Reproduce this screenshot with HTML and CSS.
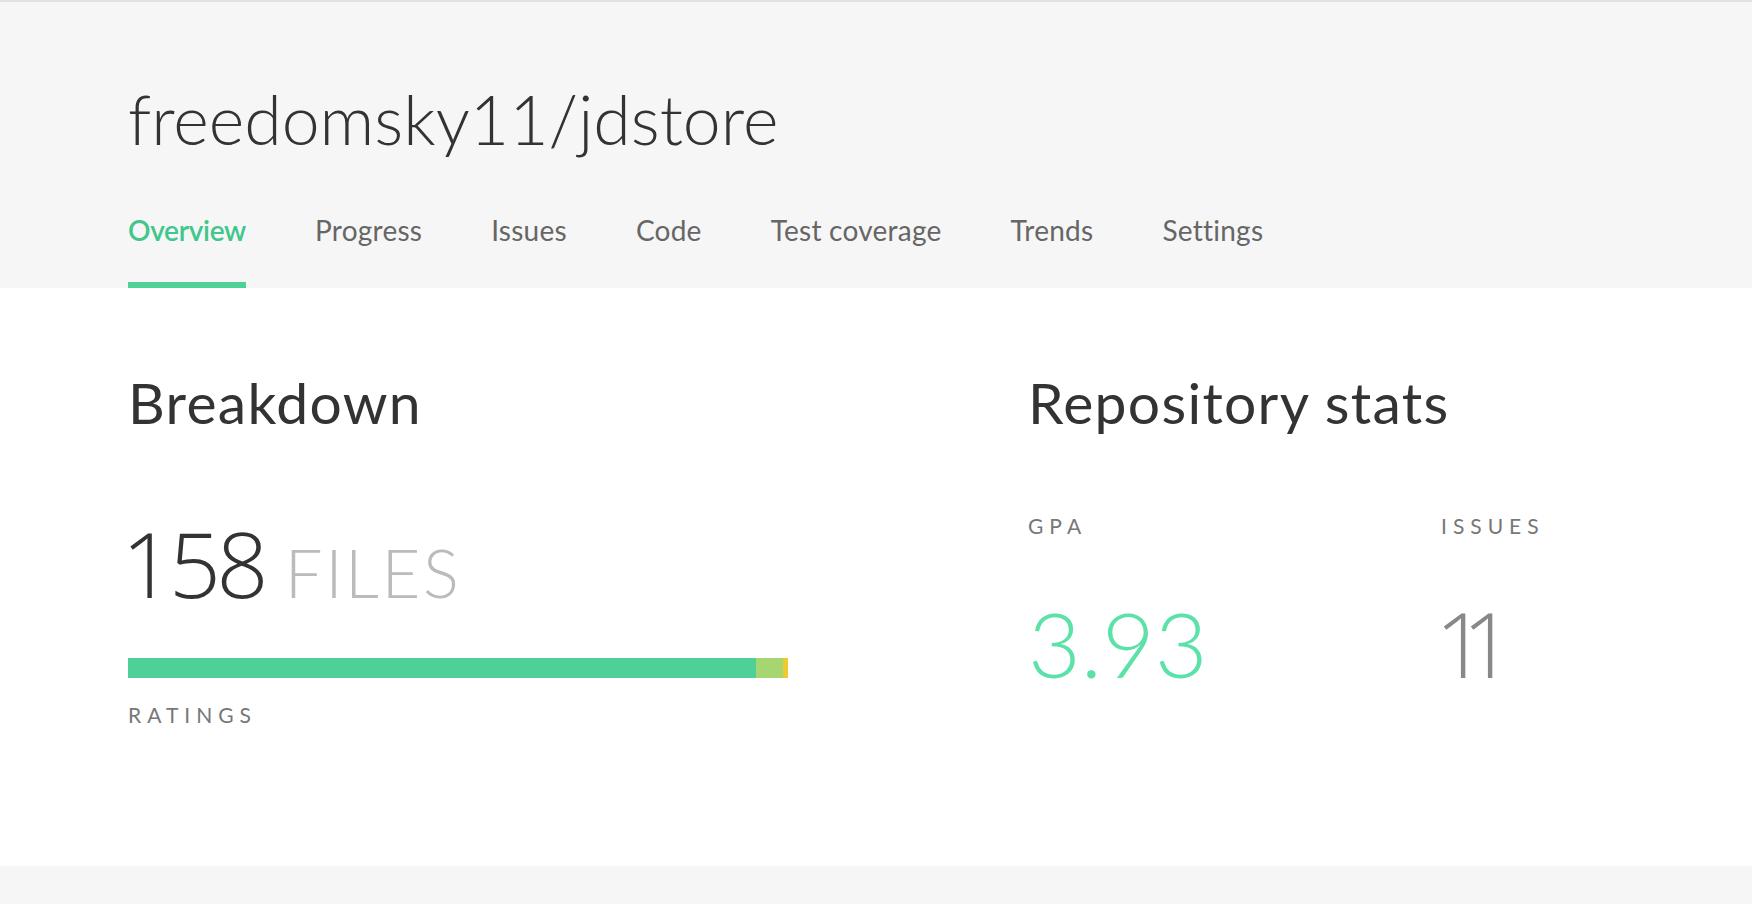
FILE: index.html
```html
<!DOCTYPE html>
<html lang="en">
<head>
<meta charset="utf-8">
<title>freedomsky11/jdstore</title>
<link rel="stylesheet" href="styles.css">
</head>
<body>
<header class="repo-header">
  <div class="container">
    <h1 class="repo-title">freedomsky11/jdstore</h1>
    <nav class="repo-nav">
      <a class="nav-link active" href="#">Overview</a>
      <a class="nav-link" href="#">Progress</a>
      <a class="nav-link" href="#">Issues</a>
      <a class="nav-link" href="#">Code</a>
      <a class="nav-link" href="#">Test coverage</a>
      <a class="nav-link" href="#">Trends</a>
      <a class="nav-link" href="#">Settings</a>
    </nav>
  </div>
</header>
<main class="repo-main">
  <div class="container columns">
    <section class="breakdown">
      <h2 class="section-title">Breakdown</h2>
      <div class="files-count"><span class="files-number">158</span><span class="files-unit">FILES</span></div>
      <div class="ratings-bar">
        <span class="seg seg-a" style="width:628px"></span>
        <span class="seg seg-b" style="width:27px"></span>
        <span class="seg seg-c" style="width:5px"></span>
      </div>
      <div class="label">RATINGS</div>
    </section>
    <section class="stats">
      <h2 class="section-title">Repository stats</h2>
      <div class="stats-grid">
        <div class="stat">
          <div class="label">GPA</div>
          <div class="stat-value gpa">3.93</div>
        </div>
        <div class="stat">
          <div class="label">ISSUES</div>
          <div class="stat-value issues">11</div>
        </div>
      </div>
    </section>
  </div>
</main>
<footer class="page-footer"></footer>
</body>
</html>
```
FILE: styles.css
```css
html {
  background: #f6f6f6;
}
body {
  margin: 0;
  font-family: "Lato", "Open Sans", sans-serif;
  color: #333;
  border-top: 2px solid #e2e2e2;
}
.container {
  padding: 0 128px;
}
.repo-header {
  background: #f6f6f6;
  padding-top: 77px;
}
.repo-title {
  margin: 0;
  font-size: 68px;
  line-height: 80px;
  font-weight: 300;
  color: #333;
}
.repo-nav {
  display: flex;
  gap: 69px;
  margin-top: 51px;
}
.nav-link {
  display: block;
  font-size: 28px;
  line-height: 40px;
  letter-spacing: 0.25px;
  padding-bottom: 32px;
  border-bottom: 6px solid transparent;
  color: #666;
  text-decoration: none;
  font-weight: 400;
}
.nav-link.active {
  color: #41c68d;
  border-bottom-color: #4dd196;
  font-weight: 600;
  letter-spacing: -0.3px;
}
.repo-main {
  background: #fff;
  padding-top: 79px;
  padding-bottom: 139px;
}
.columns {
  display: grid;
  grid-template-columns: 900px 1fr;
}
.section-title {
  margin: 0;
  font-size: 57px;
  line-height: 70px;
  letter-spacing: 1.3px;
  font-weight: 400;
  color: #333;
}
.files-count {
  display: flex;
  align-items: baseline;
  margin-top: 76px;
  line-height: 100px;
  height: 100px;
  white-space: nowrap;
}
.files-number {
  font-family: "Open Sans", "Lato", sans-serif;
  font-size: 91px;
  font-weight: 300;
  letter-spacing: -4.5px;
  margin-left: -6.5px;
  color: #333;
}
.files-unit {
  margin-left: 21px;
  font-size: 67px;
  font-weight: 300;
  letter-spacing: 2.5px;
  color: #bbb;
}
.ratings-bar {
  display: flex;
  margin-top: 45px;
  height: 20px;
}
.seg {
  display: block;
  height: 20px;
}
.seg-a { background: #4ed198; }
.seg-b { background: #a6d671; }
.seg-c { background: #f2c92c; }
.label {
  font-size: 21px;
  line-height: 24px;
  letter-spacing: 6px;
  color: #777;
  font-weight: 400;
}
.breakdown .label {
  margin-top: 25px;
}
.stats-grid {
  display: grid;
  grid-template-columns: 413px 1fr;
  margin-top: 77px;
}
.stat-value {
  margin-top: 55px;
  font-size: 91px;
  line-height: 100px;
  font-weight: 300;
}
.stat-value.gpa { color: #5ce2a8; }
.stat-value.issues {
  font-family: "Open Sans", "Lato", sans-serif;
  color: #888;
  letter-spacing: -25px;
  margin-left: -6px;
}
.page-footer {
  height: 38px;
  background: #f6f6f6;
}
```
